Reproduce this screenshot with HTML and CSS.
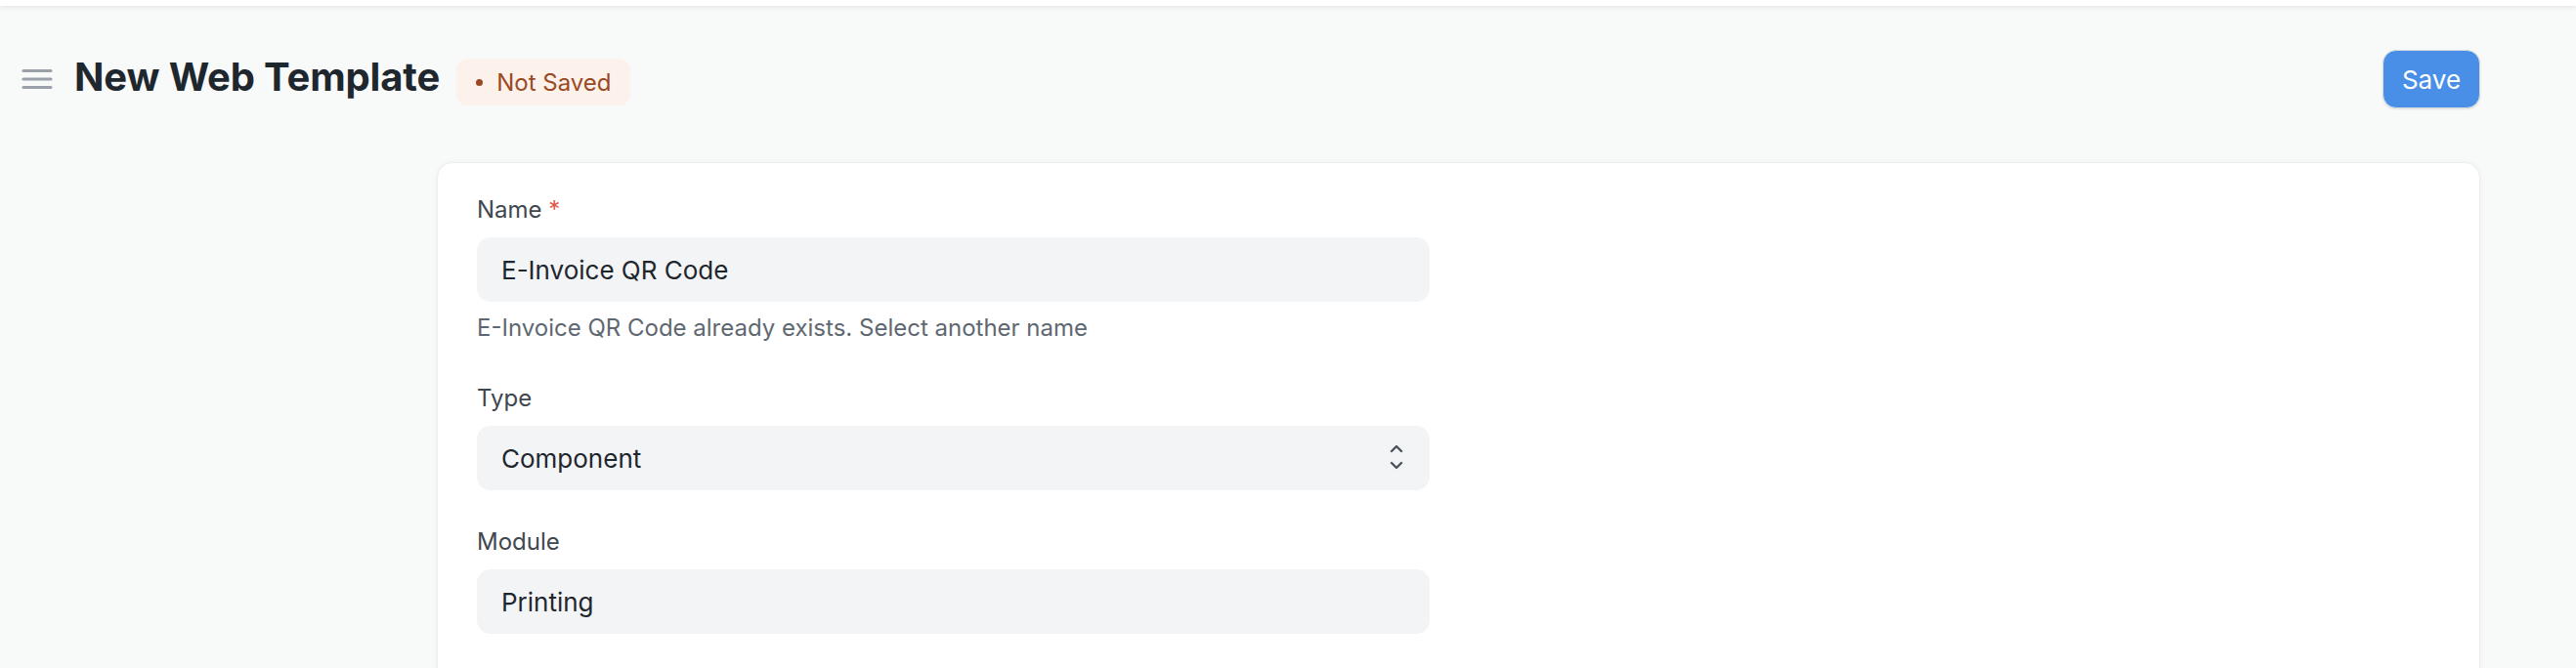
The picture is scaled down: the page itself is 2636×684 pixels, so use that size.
FILE: index.html
```html
<!DOCTYPE html>
<html lang="en">
<head>
<meta charset="utf-8">
<title>New Web Template</title>
<link rel="stylesheet" href="styles.css">
</head>
<body>
<div class="navbar"></div>
<header class="page-head">
  <div class="head-left">
    <button class="menu-btn" aria-label="Toggle sidebar">
      <svg width="32" height="24" viewBox="0 0 32 24"><path d="M2 3.5h28M2 12h28M2 20.5h28" stroke="#9aa1a8" stroke-width="3.2" stroke-linecap="round" fill="none"/></svg>
    </button>
    <h1 class="page-title">New Web Template</h1>
    <span class="badge"><span class="badge-dot"></span>Not Saved</span>
  </div>
  <button class="btn-primary">Save</button>
</header>
<div class="layout">
  <div class="sidebar"></div>
  <main class="card">
    <div class="field">
      <label class="label">Name <span class="req">*</span></label>
      <div class="control">E-Invoice QR Code</div>
      <p class="help">E-Invoice QR Code already exists. Select another name</p>
    </div>
    <div class="field">
      <label class="label">Type</label>
      <div class="control select">Component
        <svg class="chev" width="14" height="26" viewBox="0 0 14 26"><path d="M2 6l5-5 5 5M2 18l5 5 5-5" stroke="#4b535b" stroke-width="2.4" fill="none" stroke-linecap="round" stroke-linejoin="round"/></svg>
      </div>
    </div>
    <div class="field">
      <label class="label">Module</label>
      <div class="control">Printing</div>
    </div>
  </main>
</div>
</body>
</html>
```
FILE: styles.css
```css
* { box-sizing: border-box; }
html, body { margin: 0; padding: 0; }
body {
  background: #f8f9f9;
  font-family: Inter, "Noto Sans", "Liberation Sans", sans-serif;
  color: #1f272e;
  height: 684px;
  overflow: hidden;
}
.navbar {
  height: 6px;
  background: #ffffff;
  box-shadow: 0 2px 5px rgba(0, 0, 0, 0.08);
  position: relative;
  z-index: 1;
}
.page-head {
  height: 150px;
  display: flex;
  align-items: center;
  justify-content: space-between;
  padding: 0 98px 0 22px;
}
.head-left {
  display: flex;
  align-items: center;
}
.menu-btn {
  border: 0;
  background: transparent;
  padding: 0;
  width: 32px;
  height: 24px;
  margin-right: 22px;
  display: flex;
}
.page-title {
  margin: 0 17px 4px 0;
  font-size: 40px;
  line-height: 48px;
  font-weight: 700;
  color: #1f272e;
  letter-spacing: -0.15px;
}
.badge {
  display: inline-flex;
  align-items: center;
  height: 48px;
  padding: 0 20px 0 20px;
  border-radius: 12px;
  background: #fdf1ec;
  color: #9a4a22;
  font-size: 24px;
  margin-top: 6px;
}
.badge-dot {
  width: 7px;
  height: 7px;
  border-radius: 50%;
  background: #9a4a22;
  margin-right: 14px;
}
.btn-primary {
  width: 100px;
  height: 60px;
  border-radius: 14px;
  border: 1px solid #d9dde0;
  background: #4a8fe7;
  color: #ffffff;
  font-family: Inter, "Noto Sans", sans-serif;
  font-size: 26px;
  padding: 0;
  box-shadow: 0 1px 2px rgba(0, 0, 0, 0.1);
}
.layout {
  display: flex;
  padding: 10px 98px 0 0;
}
.sidebar {
  width: 447px;
  flex-shrink: 0;
}
.card {
  flex: 1;
  background: #ffffff;
  border: 1px solid #eceef0;
  border-radius: 16px;
  box-shadow: 0 1px 6px rgba(0, 0, 0, 0.05);
  padding: 36px 40px 0;
  height: 540px;
}
.field {
  width: 975px;
  margin-bottom: 41px;
}
.field:first-child { margin-bottom: 48px; }
.label {
  display: block;
  font-size: 24px;
  line-height: 24px;
  color: #40474f;
  margin-bottom: 16px;
}
.req { color: #e2574c; }
.control {
  height: 66px;
  border-radius: 14px;
  background: #f3f4f6;
  padding: 0 25px;
  display: flex;
  align-items: center;
  font-size: 26px;
  color: #1f272e;
}
.select {
  justify-content: space-between;
  padding-right: 27px;
}
.chev { display: block; }
.help {
  margin: 15px 0 0;
  font-size: 24px;
  line-height: 24px;
  color: #5f6871;
}
```
